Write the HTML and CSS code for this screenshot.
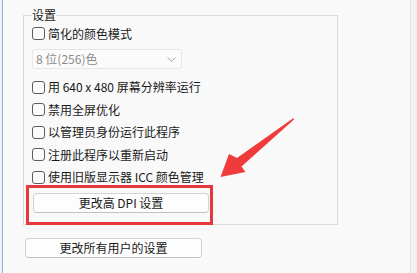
FILE: index.html
```html
<!DOCTYPE html>
<html lang="zh">
<head>
<meta charset="utf-8">
<link rel="stylesheet" href="styles.css">
</head>
<body>
<div class="edge"></div>
<div class="window">
  <fieldset class="group">
    <legend class="legend">设置</legend>
    <div class="row"><span class="cb"></span><span class="label">简化的颜色模式</span></div>
    <div class="select"><span class="select-text">8 位(256)色</span>
      <svg class="chev" width="9" height="5" viewBox="0 0 9 5"><path d="M0.5 0.5 L4.5 4.2 L8.5 0.5" fill="none" stroke="#a6a6a6" stroke-width="1"/></svg>
    </div>
    <div class="rows">
      <div class="row"><span class="cb"></span><span class="label">用 640 x 480 屏幕分辨率运行</span></div>
      <div class="row"><span class="cb"></span><span class="label">禁用全屏优化</span></div>
      <div class="row"><span class="cb"></span><span class="label">以管理员身份运行此程序</span></div>
      <div class="row"><span class="cb"></span><span class="label">注册此程序以重新启动</span></div>
      <div class="row"><span class="cb"></span><span class="label">使用旧版显示器 ICC 颜色管理</span></div>
    </div>
    <button class="btn btn-dpi">更改高 DPI 设置</button>
  </fieldset>
  <button class="btn btn-all">更改所有用户的设置</button>
</div>
<div class="rail"></div>
<div class="highlight"></div>
<svg class="arrow" width="417" height="273" viewBox="0 0 417 273">
  <polygon points="293.5,118 237,158 229,154 220.5,177 245.5,172 241.5,166.5 294,119.5" fill="#f03b3c"/>
</svg>
</body>
</html>
```
FILE: styles.css
```css
html, body {
  margin: 0;
  padding: 0;
}
body {
  width: 417px;
  height: 273px;
  overflow: hidden;
  display: flex;
  background: #f9f9f9;
  font-family: "Noto Sans CJK SC", "Microsoft YaHei", sans-serif;
  font-size: 12px;
  color: #1a1a1a;
  position: relative;
}
.edge {
  width: 2px;
  background: #eef2f7;
}
.window {
  flex: 1;
  border-left: 1px solid #8db1da;
  display: flex;
  flex-direction: column;
  align-items: flex-start;
}
.rail {
  width: 6px;
  background: #f1f1f1;
  border-left: 1px solid #e3e3e3;
}
.group {
  box-sizing: border-box;
  width: 315px;
  margin: 8px 0 0 20px;
  padding: 0 0 11px 8px;
  border: 1px solid #d9d9d9;
  min-width: 0;
}
.legend {
  padding: 0;
  line-height: 14px;
  height: 14px;
}
.row {
  display: flex;
  align-items: center;
  height: 22.5px;
}
.group > .row:first-of-type {
  height: 23px;
}
.cb {
  box-sizing: border-box;
  width: 13px;
  height: 13px;
  border: 1px solid #5c5c5c;
  border-radius: 3px;
  background: #fbfbfb;
  margin-right: 3px;
  flex: none;
}
.label {
  line-height: 14px;
  white-space: nowrap;
}
.select {
  box-sizing: border-box;
  width: 150px;
  height: 20px;
  margin-top: 4px;
  border: 1px solid #e6e6e6;
  border-radius: 3px;
  background: #fbfbfb;
  display: flex;
  align-items: center;
  justify-content: space-between;
  padding: 0 5px 0 3px;
}
.select-text {
  color: #8c8c8c;
  line-height: 14px;
}
.chev {
  display: block;
}
.rows {
  margin-top: 7px;
}
.btn {
  box-sizing: border-box;
  font-family: inherit;
  font-size: 12px;
  color: #1a1a1a;
  background: #fdfdfd;
  border: 1px solid #d3d3d3;
  border-bottom-color: #c2c2c2;
  border-radius: 4px;
  padding: 0;
  line-height: 14px;
  display: block;
}
.btn-dpi {
  width: 176px;
  height: 20px;
  margin: 4.5px 0 0 1px;
}
.btn-all {
  width: 177px;
  height: 20px;
  margin: 13px 0 0 22px;
}
.highlight {
  position: absolute;
  left: 26px;
  top: 185px;
  width: 187px;
  height: 40px;
  box-sizing: border-box;
  border: 3px solid #e6393d;
}
.arrow {
  position: absolute;
  left: 0;
  top: 0;
  pointer-events: none;
}
```
